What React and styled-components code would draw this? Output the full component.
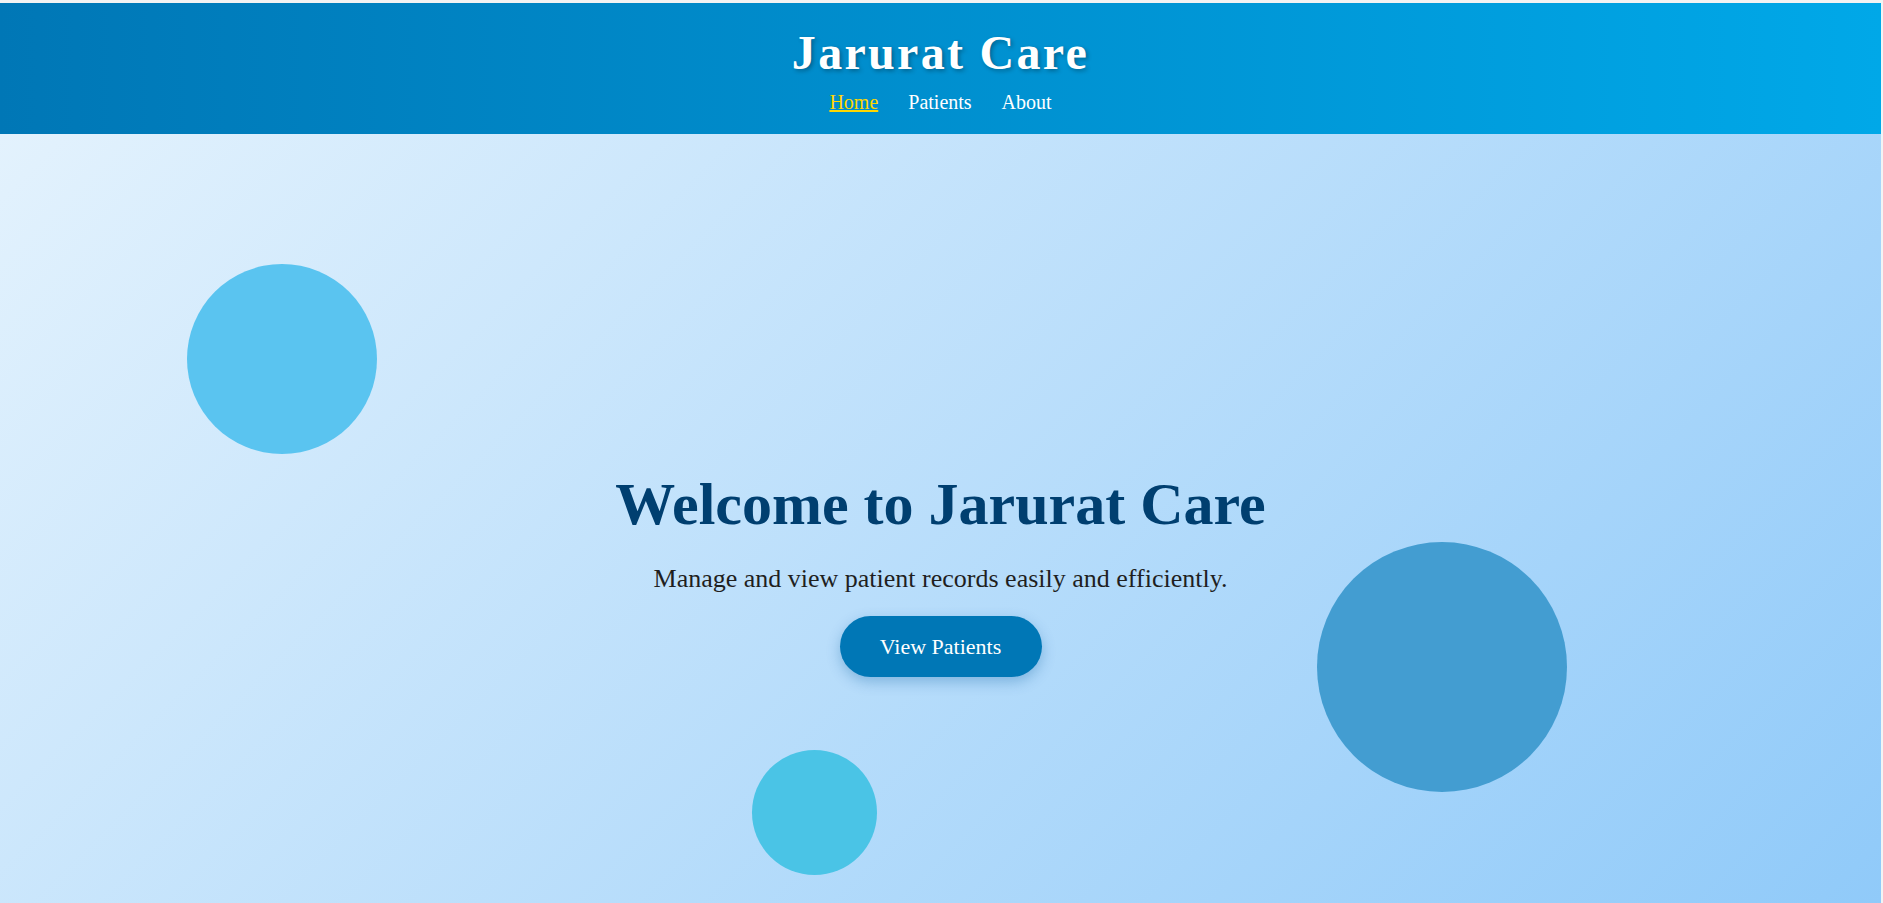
import styled, { createGlobalStyle } from "styled-components";

const GlobalStyle = createGlobalStyle`
  html, body {
    margin: 0;
    padding: 0;
    background: #f3f3f3;
  }
  body {
    font-family: "Liberation Serif", "Times New Roman", serif;
    overflow: hidden;
  }
`;

const circles = [
  { size: 190, top: 130, left: 187, color: "#5ac4f0" },
  { size: 250, top: 408, left: 1317, color: "#439dd1" },
  { size: 125, top: 616, left: 752, color: "#4ac4e6" },
];

export default function App() {
  return (
    <>
      <GlobalStyle />
      <Page>
        <Header>
          <Title>Jarurat Care</Title>
          <Nav>
            <NavLink href="#" $active>
              Home
            </NavLink>
            <NavLink href="#">Patients</NavLink>
            <NavLink href="#">About</NavLink>
          </Nav>
        </Header>
        <Hero>
          {circles.map((c, i) => (
            <Circle
              key={i}
              $color={c.color}
              style={{ width: c.size, height: c.size, top: c.top, left: c.left }}
            />
          ))}
          <HeroContent>
            <Heading>Welcome to Jarurat Care</Heading>
            <Subtitle>Manage and view patient records easily and efficiently.</Subtitle>
            <CtaButton>View Patients</CtaButton>
          </HeroContent>
        </Hero>
      </Page>
    </>
  );
}

const Page = styled.div`
  margin-top: 3px;
  margin-right: 2px;
`;

const Header = styled.header`
  background: linear-gradient(90deg, #0077b6, #00a8e8);
  padding: 22px 0 20px;
  text-align: center;
  color: #ffffff;
`;

const Title = styled.h1`
  margin: 0 0 11px;
  font-size: 48px;
  font-weight: 700;
  letter-spacing: 2.3px;
  line-height: 55px;
  text-shadow: 2px 2px 4px rgba(0, 0, 0, 0.3);
`;

const Nav = styled.nav`
  display: flex;
  justify-content: center;
  gap: 30px;
`;

const NavLink = styled.a`
  font-size: 20px;
  line-height: 23px;
  color: ${({ $active }) => ($active ? "#ffd700" : "#ffffff")};
  text-decoration: ${({ $active }) => ($active ? "underline" : "none")};
`;

const Hero = styled.section`
  position: relative;
  height: 769px;
  overflow: hidden;
  background: linear-gradient(135deg, #e3f2fd, #90caf9);
`;

const Circle = styled.div`
  position: absolute;
  border-radius: 50%;
  background: ${({ $color }) => $color};
`;

const HeroContent = styled.div`
  position: relative;
  display: flex;
  flex-direction: column;
  align-items: center;
  padding-top: 336px;
  text-align: center;
`;

const Heading = styled.h2`
  margin: 0 0 26px;
  font-size: 60px;
  line-height: 68px;
  font-weight: 700;
  color: #003f70;
`;

const Subtitle = styled.p`
  margin: 0 0 22px;
  font-size: 26px;
  line-height: 30px;
  color: #1f1f1f;
`;

const CtaButton = styled.button`
  width: 202px;
  height: 61px;
  border: none;
  border-radius: 31px;
  background: #0077b6;
  color: #ffffff;
  font-family: "Liberation Serif", "Times New Roman", serif;
  font-size: 22px;
  cursor: pointer;
  box-shadow: 0 5px 14px rgba(0, 90, 160, 0.3);
`;
